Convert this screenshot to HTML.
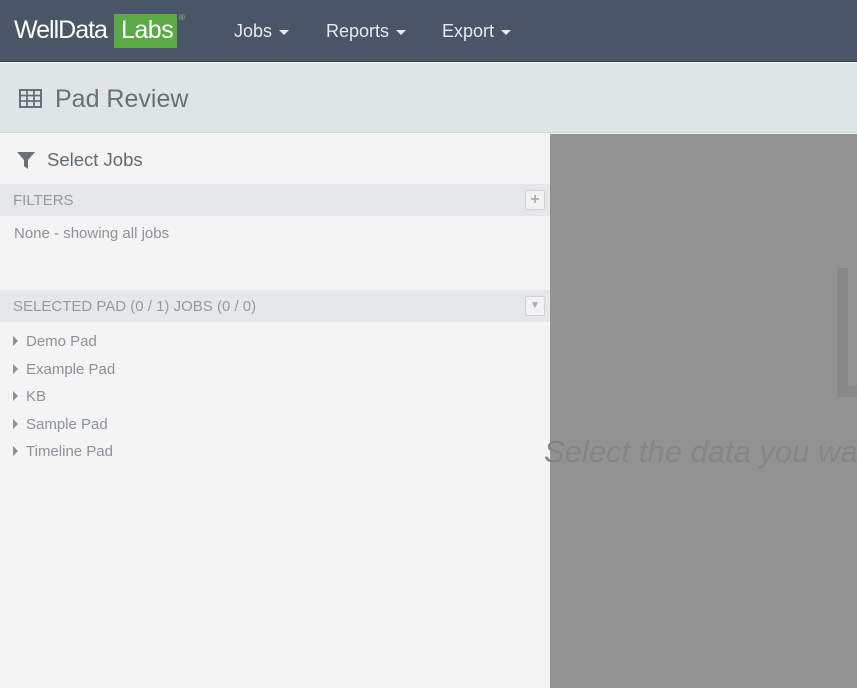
<!DOCTYPE html>
<html><head><style>
*{margin:0;padding:0;box-sizing:border-box}
body{width:857px;height:688px;overflow:hidden;font-family:"Liberation Sans",sans-serif;background:#f4f4f4;position:relative}
.nav{position:absolute;left:0;top:0;width:857px;height:62px;background:#4a5565;border-bottom:1px solid #3a4350}
.logo{position:absolute;left:14px;top:16px;color:#fff;font-size:25px;letter-spacing:-1px}
.labs{position:absolute;left:114px;top:14px;width:63px;height:34px;background:#5aaa46;color:#fff;font-size:25px;padding:2px 0 0 7px;letter-spacing:-0.5px}
.reg{position:absolute;left:179px;top:13px;color:#8fc47f;font-size:8px}
.menu{position:absolute;top:21px;color:#e6e9ed;font-size:18px}
.menu:after{content:"";display:inline-block;margin-left:7px;vertical-align:middle;border-left:5px solid transparent;border-right:5px solid transparent;border-top:5px solid #e6e9ed}
.hdr{position:absolute;left:0;top:63px;width:857px;height:70px;background:#dfe5e5;border-bottom:1px solid #cfd6d6}
.hdr h1{position:absolute;left:55px;top:22px;font-weight:normal;font-size:25px;color:#68717b}
.side{position:absolute;left:0;top:134px;width:550px;height:554px;background:#f4f4f4}
.sj{position:absolute;left:47px;top:15px;font-size:18.5px;color:#606a75}
.bar{position:absolute;left:0;width:550px;height:32px;background:#e6e7e8;color:#959ba3;font-size:15px;padding:8px 0 0 13px}
.btn{position:absolute;right:5px;top:6px;width:20px;height:20px;border:1px solid #cfd2d5;background:#f2f2f2;border-radius:2px;color:#a9aeb4;font-size:16px;font-weight:bold;text-align:center;line-height:17px}
.t{position:absolute;font-size:15px;color:#8a929a}
.it{position:absolute;left:13px;font-size:15px;color:#8a929a}
.it:before{content:"";display:inline-block;border-top:5px solid transparent;border-bottom:5px solid transparent;border-left:5px solid #8a929a;margin-right:8px;vertical-align:0px}
.main{position:absolute;left:550px;top:134px;width:307px;height:554px;background:#929292}
</style></head><body>
<div class="nav">
<div class="logo">WellData</div><div class="labs">Labs</div><div class="reg">®</div>
<div class="menu" style="left:234px">Jobs</div>
<div class="menu" style="left:326px">Reports</div>
<div class="menu" style="left:442px">Export</div>
</div>
<div class="hdr">
<svg style="position:absolute;left:19px;top:26px" width="23" height="19" viewBox="0 0 23 19"><rect x="1" y="1" width="21" height="17" fill="none" stroke="#68717b" stroke-width="2"/><path d="M1 6.5H22M1 12H22M8 1V18M15 1V18" stroke="#68717b" stroke-width="1.8"/></svg>
<h1>Pad Review</h1></div>
<div class="side">
<svg style="position:absolute;left:17px;top:18px" width="18" height="17" viewBox="0 0 18 17"><path d="M0 0H18L11 8V17L7 14V8Z" fill="#68717b"/></svg>
<div class="sj">Select Jobs</div>
<div class="bar" style="top:50px">FILTERS<div class="btn">+</div></div>
<div class="t" style="left:14px;top:91px">None - showing all jobs</div>
<div class="bar" style="top:156px">SELECTED PAD (0 / 1) JOBS (0 / 0)<div class="btn" style="font-size:10px;font-weight:normal">▼</div></div>
<div class="it" style="top:199px">Demo Pad</div>
<div class="it" style="top:227px">Example Pad</div>
<div class="it" style="top:254px">KB</div>
<div class="it" style="top:282px">Sample Pad</div>
<div class="it" style="top:309px">Timeline Pad</div>
</div>
<div class="main">
<div style="position:absolute;left:287px;top:134px;width:20px;height:129px;background:#888"></div>
<div style="position:absolute;left:298px;top:134px;width:9px;height:118px;background:#929292"></div>
<div style="position:absolute;left:-6px;top:300px;white-space:nowrap;font-size:31px;font-style:italic;color:#858585">Select the data you want</div>
</div>
</body></html>
